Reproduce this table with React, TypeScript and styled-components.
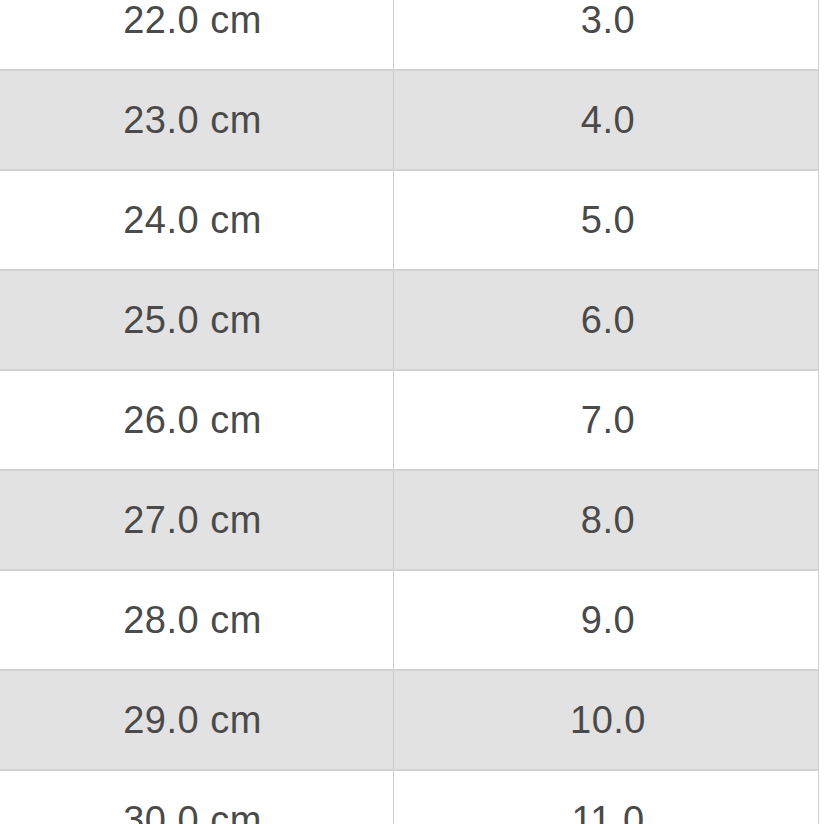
import React from 'react';
import styled, { createGlobalStyle } from 'styled-components';

const GlobalStyle = createGlobalStyle`
  html, body {
    margin: 0;
    padding: 0;
    background: #ffffff;
    overflow: hidden;
  }
`;

const Page = styled.div`
  width: 824px;
  height: 824px;
  overflow: hidden;
  background: #ffffff;
`;

const Table = styled.div`
  width: 819px;
  margin-top: -29px;
  border-right: 1px solid #cccccc;
  box-sizing: border-box;
`;

const Row = styled.div<{ $shaded: boolean }>`
  display: grid;
  grid-template-columns: 393px 1fr;
  height: 100px;
  box-sizing: border-box;
  border-bottom: 2px solid #d2d2d2;
  background: ${(p) => (p.$shaded ? '#e2e2e2' : '#ffffff')};
`;

const Cell = styled.div<{ $nudge: number }>`
  display: flex;
  align-items: center;
  justify-content: center;
  padding-left: ${(p) => (p.$nudge > 0 ? p.$nudge * 2 : 0)}px;
  padding-right: ${(p) => (p.$nudge < 0 ? -p.$nudge * 2 : 0)}px;
  font-family: 'Liberation Sans', Arial, sans-serif;
  font-size: 38px;
  color: #4a4a4a;
  letter-spacing: 0.5px;

  & + & {
    border-left: 1px solid #cccccc;
  }
`;

const sizes = [
  ['22.0 cm', '3.0'],
  ['23.0 cm', '4.0'],
  ['24.0 cm', '5.0'],
  ['25.0 cm', '6.0'],
  ['26.0 cm', '7.0'],
  ['27.0 cm', '8.0'],
  ['28.0 cm', '9.0'],
  ['29.0 cm', '10.0'],
  ['30.0 cm', '11.0'],
];

export default function App() {
  return (
    <>
      <GlobalStyle />
      <Page>
        <Table>
          {sizes.map(([cm, us], i) => (
            <Row key={cm} $shaded={i % 2 === 1}>
              <Cell $nudge={-4}>{cm}</Cell>
              <Cell $nudge={2}>{us}</Cell>
            </Row>
          ))}
        </Table>
      </Page>
    </>
  );
}
